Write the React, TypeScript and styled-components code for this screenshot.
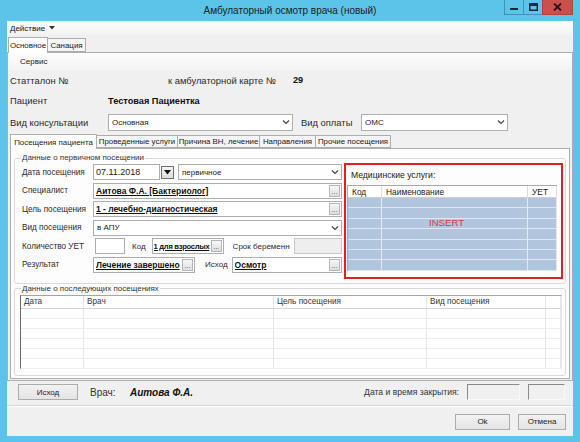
import React from "react";
import styled, { createGlobalStyle } from "styled-components";

const Global = createGlobalStyle`
  html, body { margin: 0; padding: 0; }
  body { font-family: "Liberation Sans", Arial, sans-serif; background: #5bc4e8; color: #222; }
  * { box-sizing: border-box; }
`;

const Window = styled.div`
  width: 580px;
  height: 442px;
  background: #5bc4e8;
  display: flex;
  flex-direction: column;
  overflow: hidden;
`;

const TitleBar = styled.div`
  height: 21px;
  display: grid;
  grid-template-columns: 1fr auto 1fr;
  align-items: start;
`;

const Title = styled.div`
  grid-column: 2;
  font-size: 10px;
  line-height: 21px;
  color: #1d1d1d;
`;

const Controls = styled.div`
  grid-column: 3;
  justify-self: end;
  display: flex;
  margin-right: 7px;
`;

const CtrlBtn = styled.div<{ $w: number; $close?: boolean }>`
  width: ${(p) => p.$w}px;
  height: 15px;
  display: flex;
  align-items: center;
  justify-content: center;
  background: ${(p) => (p.$close ? "#c9504b" : "#5bc4e8")};
  border: 1px solid ${(p) => (p.$close ? "#b04440" : "#3d93bd")};
  border-top: none;
  margin-left: -1px;
`;

const Client = styled.div`
  flex: 1;
  margin: 0 7px 6px 7px;
  background: #f0f0f0;
  display: flex;
  flex-direction: column;
`;

const MenuBar = styled.div`
  height: 14px;
  background: linear-gradient(#fdfdfd, #f1f2f4);
  font-size: 8px;
  display: flex;
  align-items: center;
  padding-left: 3px;
  gap: 4px;
  color: #111;
`;

const TabStrip = styled.div<{ $h: number; $pl: number }>`
  height: ${(p) => p.$h}px;
  display: flex;
  align-items: flex-end;
  padding-left: ${(p) => p.$pl}px;
  position: relative;
  z-index: 1;
`;

const Tab = styled.div<{ $active?: boolean; $w: number; $h: number }>`
  width: ${(p) => p.$w}px;
  height: ${(p) => (p.$active ? p.$h + 2 : p.$h)}px;
  margin-bottom: ${(p) => (p.$active ? -1 : 0)}px;
  border: 1px solid #adadad;
  border-bottom: ${(p) => (p.$active ? "none" : "1px solid #adadad")};
  margin-right: -1px;
  background: ${(p) => (p.$active ? "#ffffff" : "#f5f5f5")};
  font-size: 7.9px;
  white-space: nowrap;
  overflow: hidden;
  display: flex;
  align-items: center;
  justify-content: center;
  color: #1a1a1a;
`;

const OuterPanel = styled.div`
  height: 329px;
  border: 1px solid #adadad;
  background: #f0f0f0;
  display: flex;
  flex-direction: column;
  padding-bottom: 1px;
`;

const ServiceBar = styled.div`
  height: 17px;
  background: linear-gradient(#fcfcfc, #f4f4f4);
  font-size: 8px;
  display: flex;
  align-items: center;
  padding-left: 12px;
  color: #222;
`;

const InfoRow = styled.div<{ $h: number }>`
  height: ${(p) => p.$h}px;
  display: flex;
  align-items: center;
  padding-left: 2px;
  font-size: 9.4px;
  color: #2a2a2a;
`;

const InfoLabel = styled.span<{ $w: number; $ml?: number }>`
  width: ${(p) => p.$w}px;
  margin-left: ${(p) => p.$ml ?? 0}px;
  flex: none;
  white-space: nowrap;
`;

const BoldValue = styled.span`
  font-weight: bold;
  font-size: 9.2px;
  color: #111;
`;

const Combo = styled.div<{ $w?: number; $h?: number; $ml?: number }>`
  ${(p) => (p.$w ? `width: ${p.$w}px; flex: none;` : "flex: 1;")}
  margin-left: ${(p) => p.$ml ?? 0}px;
  height: ${(p) => p.$h ?? 16}px;
  border: 1px solid #abadb3;
  background: #fff;
  display: flex;
  align-items: center;
  padding-left: 3px;
  font-size: 8px;
  color: #222;
  min-width: 0;
`;

const ComboText = styled.span`
  flex: 1;
  white-space: nowrap;
  overflow: hidden;
`;

const InnerPanel = styled.div`
  flex: 1;
  margin: 0 2px;
  border: 1px solid #adadad;
  background: #fdfdfd;
  padding: 4px 3px 1px 3px;
  display: flex;
  flex-direction: column;
`;

const Group = styled.fieldset`
  margin: 0;
  padding: 0;
  border: 1px solid #d9d9d9;
  border-radius: 3px;
  min-width: 0;
`;

const Legend = styled.legend`
  font-size: 8px;
  line-height: 10px;
  padding: 0 1px;
  margin-left: 6px;
  color: #333;
`;

const GroupBody = styled.div<{ $pad: string }>`
  display: flex;
  padding: ${(p) => p.$pad};
  gap: 2px;
`;

const Form = styled.div`
  width: 320px;
  padding-top: 1px;
  display: grid;
  grid-template-columns: 71px 1fr;
  grid-auto-rows: 16px;
  row-gap: 2.6px;
  align-items: center;
`;

const FieldLabel = styled.span`
  font-size: 8.2px;
  color: #2a2a2a;
  white-space: nowrap;
`;

const Fields = styled.div`
  display: flex;
  align-items: center;
  height: 16px;
  min-width: 0;
`;

const TextBox = styled.div<{ $w?: number; $disabled?: boolean; $ml?: number }>`
  ${(p) => (p.$w ? `width: ${p.$w}px; flex: none;` : "flex: 1;")}
  margin-left: ${(p) => p.$ml ?? 0}px;
  height: 16px;
  border: 1px solid ${(p) => (p.$disabled ? "#c8c8c8" : "#abadb3")};
  background: ${(p) => (p.$disabled ? "#eeeeee" : "#fff")};
  font-size: 9px;
  display: flex;
  align-items: center;
  padding-left: 2px;
`;

const DateBtn = styled.div`
  width: 13px;
  height: 13px;
  flex: none;
  border: 1px solid #707070;
  background: linear-gradient(#f4f4f4, #dcdcdc);
  display: flex;
  align-items: center;
  justify-content: center;
  margin-left: 1px;
`;

const Lookup = styled.div<{ $w?: number; $ml?: number; $tight?: boolean }>`
  ${(p) => (p.$w ? `width: ${p.$w}px; flex: none;` : "flex: 1;")}
  margin-left: ${(p) => p.$ml ?? 0}px;
  height: 16px;
  border: 1px solid #abadb3;
  background: #fff;
  display: flex;
  align-items: center;
  padding-left: ${(p) => (p.$tight ? 1 : 2)}px;
  min-width: 0;
`;

const LookupText = styled.span<{ $tight?: boolean }>`
  flex: 1;
  min-width: 0;
  font-size: ${(p) => (p.$tight ? 7.6 : 8.5)}px;
  letter-spacing: ${(p) => (p.$tight ? -0.3 : 0)}px;
  font-weight: bold;
  text-decoration: underline;
  white-space: nowrap;
  overflow: hidden;
  color: #111;
`;

const Ellipsis = styled.div`
  width: 11px;
  height: 12px;
  flex: none;
  margin: 0 1px;
  border: 1px solid #b5b5b5;
  background: linear-gradient(#f7f7f7, #dedede);
  font-size: 7px;
  line-height: 8px;
  display: flex;
  align-items: flex-end;
  justify-content: center;
  color: #555;
`;

const InlineLabel = styled.span<{ $ml: number; $w?: number }>`
  margin-left: ${(p) => p.$ml}px;
  ${(p) => (p.$w ? `width: ${p.$w}px; overflow: hidden;` : "")}
  flex: none;
  font-size: 8px;
  color: #2a2a2a;
  white-space: nowrap;
  margin-right: 3px;
`;

const RedBox = styled.div`
  width: 219px;
  flex: none;
  border: 2px solid #e11f1f;
  padding: 0 4px 6px 1px;
  display: flex;
  flex-direction: column;
`;

const RedTitle = styled.div`
  height: 20px;
  font-size: 8.6px;
  display: flex;
  align-items: center;
  padding-left: 4px;
  color: #222;
`;

const MedTable = styled.div`
  border-top: 1px solid #a8a8a8;
  border-left: 1px solid #a8a8a8;
  display: flex;
  flex-direction: column;
`;

const MedRow = styled.div<{ $header?: boolean }>`
  display: grid;
  grid-template-columns: 34px 146px 1fr;
  height: ${(p) => (p.$header ? 12 : 10.4)}px;
  background: ${(p) => (p.$header ? "#ffffff" : "#b1c5de")};
  border-bottom: 1px solid ${(p) => (p.$header ? "#cfcfcf" : "#dde6f1")};
`;

const MedCell = styled.div<{ $header?: boolean }>`
  border-right: 1px solid ${(p) => (p.$header ? "#dcdcdc" : "#e3eaf3")};
  font-size: 8.4px;
  padding-left: 4px;
  line-height: 12px;
  color: #222;
  white-space: nowrap;
`;

const MedBody = styled.div`
  position: relative;
`;

const InsertLabel = styled.span`
  position: absolute;
  left: 81px;
  top: 19px;
  font-size: 9.6px;
  color: #d8334f;
`;

const VisitTable = styled.div`
  flex: 1;
  height: 74px;
  border-top: 1px solid #a5a5a5;
  border-left: 1px solid #6a6a6a;
  border-right: 1px solid #e5e5e5;
  border-bottom: 1px solid #e5e5e5;
  background: #fff;
  display: flex;
  flex-direction: column;
`;

const VisitRow = styled.div<{ $header?: boolean }>`
  display: grid;
  grid-template-columns: 63px 190px 153px 119px 1fr;
  height: ${(p) => (p.$header ? 13 : 10)}px;
  border-bottom: 1px solid ${(p) => (p.$header ? "#d4d4d4" : "#eeeeee")};
  flex: none;
`;

const VisitCell = styled.div`
  border-right: 1px solid #e6e6e6;
  font-size: 8.2px;
  line-height: 12px;
  padding-left: 3px;
  color: #333;
  white-space: nowrap;
`;

const BottomRow = styled.div`
  height: 22px;
  display: flex;
  align-items: center;
  padding: 0 8px 0 11px;
  font-size: 10px;
  color: #333;
`;

const Button = styled.div<{ $w: number }>`
  width: ${(p) => p.$w}px;
  height: 16px;
  flex: none;
  border: 1px solid #acacac;
  background: linear-gradient(#f2f2f2, #e4e4e4);
  font-size: 8px;
  display: flex;
  align-items: center;
  justify-content: center;
  color: #1a1a1a;
`;

const DoctorLabel = styled.span`
  margin-left: 12px;
  width: 40px;
`;

const DoctorName = styled.span`
  font-weight: bold;
  font-style: italic;
  color: #111;
`;

const Spacer = styled.div`
  flex: 1;
`;

const CloseLabel = styled.span`
  font-size: 8.6px;
`;

const SunkenBox = styled.div<{ $w: number }>`
  width: ${(p) => p.$w}px;
  height: 16px;
  margin-left: 8px;
  border-top: 1px solid #8a8a8a;
  border-left: 1px solid #8a8a8a;
  border-right: 1px solid #f8f8f8;
  border-bottom: 1px solid #f8f8f8;
  background: #f0f0f0;
`;

const Separator = styled.div`
  margin-top: 2px;
  height: 2px;
  border-top: 1px solid #d6d6d6;
  border-bottom: 1px solid #ffffff;
`;

const ButtonRow = styled.div`
  flex: 1;
  display: flex;
  align-items: center;
  justify-content: flex-end;
  gap: 8px;
  padding-right: 7px;
`;

const Chevron = () => (
  <svg width="12" height="8" viewBox="0 0 12 8">
    <path d="M3 2.5 L6 5.5 L9 2.5" fill="none" stroke="#444" strokeWidth="1.2" />
  </svg>
);

const medRows = Array.from({ length: 7 });
const visitRows = Array.from({ length: 6 });

export default function App() {
  return (
    <>
      <Global />
      <Window>
        <TitleBar>
          <Title>Амбулаторный осмотр врача (новый)</Title>
          <Controls>
            <CtrlBtn $w={20}>
              <svg width="8" height="8" viewBox="0 0 8 8">
                <rect x="0" y="5" width="8" height="2" fill="#1b2a33" />
              </svg>
            </CtrlBtn>
            <CtrlBtn $w={20}>
              <svg width="9" height="8" viewBox="0 0 9 8">
                <rect x="0.75" y="0.75" width="7.5" height="6.5" fill="none" stroke="#1b2a33" strokeWidth="1.5" />
                <rect x="0" y="0" width="9" height="3" fill="#1b2a33" />
              </svg>
            </CtrlBtn>
            <CtrlBtn $w={31} $close>
              <svg width="9" height="8" viewBox="0 0 9 8">
                <path d="M1 0.5 L8 7.5 M8 0.5 L1 7.5" stroke="#2a1414" strokeWidth="1.8" />
              </svg>
            </CtrlBtn>
          </Controls>
        </TitleBar>
        <Client>
          <MenuBar>
            <span>Действие</span>
            <svg width="6" height="4" viewBox="0 0 6 4">
              <path d="M0 0 L6 0 L3 3.5 Z" fill="#333" />
            </svg>
          </MenuBar>
          <TabStrip $h={17} $pl={1}>
            <Tab $active $w={40} $h={14}>Основное</Tab>
            <Tab $w={39} $h={14}>Санация</Tab>
          </TabStrip>
          <OuterPanel>
            <ServiceBar>Сервис</ServiceBar>
            <InfoRow $h={20}>
              <InfoLabel $w={158}>Статталон №</InfoLabel>
              <InfoLabel $w={125}>к амбулаторной карте №</InfoLabel>
              <BoldValue>29</BoldValue>
            </InfoRow>
            <InfoRow $h={21}>
              <InfoLabel $w={98}>Пациент</InfoLabel>
              <BoldValue>Тестовая Пациентка</BoldValue>
            </InfoRow>
            <InfoRow $h={22}>
              <InfoLabel $w={98}>Вид консультации</InfoLabel>
              <Combo $w={185} $h={17}>
                <ComboText>Основная</ComboText>
                <Chevron />
              </Combo>
              <InfoLabel $w={60} $ml={8}>Вид оплаты</InfoLabel>
              <Combo $w={147} $h={17}>
                <ComboText>ОМС</ComboText>
                <Chevron />
              </Combo>
            </InfoRow>
            <TabStrip $h={15} $pl={2}>
              <Tab $active $w={87} $h={13}>Посещения пациента</Tab>
              <Tab $w={82} $h={13}>Проведенные услуги</Tab>
              <Tab $w={83} $h={13}>Причина ВН, лечение</Tab>
              <Tab $w={57} $h={13}>Направления</Tab>
              <Tab $w={76} $h={13}>Прочие посещения</Tab>
            </TabStrip>
            <InnerPanel>
              <Group>
                <Legend>Данные о первичном посещении</Legend>
                <GroupBody $pad="0 2px 4px 7px">
                  <Form>
                    <FieldLabel>Дата посещения</FieldLabel>
                    <Fields>
                      <TextBox $w={67}>07.11.2018</TextBox>
                      <DateBtn>
                        <svg width="7" height="5" viewBox="0 0 7 5">
                          <path d="M0 0 L7 0 L3.5 4.5 Z" fill="#111" />
                        </svg>
                      </DateBtn>
                      <Combo $ml={4}>
                        <ComboText>первичное</ComboText>
                        <Chevron />
                      </Combo>
                    </Fields>

                    <FieldLabel>Специалист</FieldLabel>
                    <Fields>
                      <Lookup>
                        <LookupText>Аитова Ф.А. [Бактериолог]</LookupText>
                        <Ellipsis>...</Ellipsis>
                      </Lookup>
                    </Fields>

                    <FieldLabel>Цель посещения</FieldLabel>
                    <Fields>
                      <Lookup>
                        <LookupText>1 - лечебно-диагностическая</LookupText>
                        <Ellipsis>...</Ellipsis>
                      </Lookup>
                    </Fields>

                    <FieldLabel>Вид посещения</FieldLabel>
                    <Fields>
                      <Combo>
                        <ComboText>в АПУ</ComboText>
                        <Chevron />
                      </Combo>
                    </Fields>

                    <FieldLabel>Количество УЕТ</FieldLabel>
                    <Fields>
                      <TextBox $w={30} $ml={2} />
                      <InlineLabel $ml={7}>Код</InlineLabel>
                      <Lookup $w={72} $ml={3} $tight>
                        <LookupText $tight>1 для взрослых</LookupText>
                        <Ellipsis>...</Ellipsis>
                      </Lookup>
                      <InlineLabel $ml={9} $w={57}>Срок беременности</InlineLabel>
                      <TextBox $disabled $ml={1} />
                    </Fields>

                    <FieldLabel>Результат</FieldLabel>
                    <Fields>
                      <Lookup $w={102}>
                        <LookupText>Лечение завершено</LookupText>
                        <Ellipsis>...</Ellipsis>
                      </Lookup>
                      <InlineLabel $ml={10}>Исход</InlineLabel>
                      <Lookup $ml={1}>
                        <LookupText>Осмотр</LookupText>
                        <Ellipsis>...</Ellipsis>
                      </Lookup>
                    </Fields>
                  </Form>
                  <RedBox>
                    <RedTitle>Медицинские услуги:</RedTitle>
                    <MedTable>
                      <MedRow $header>
                        <MedCell $header>Код</MedCell>
                        <MedCell $header>Наименование</MedCell>
                        <MedCell $header>УЕТ</MedCell>
                      </MedRow>
                      <MedBody>
                        {medRows.map((_, i) => (
                          <MedRow key={i}>
                            <MedCell />
                            <MedCell />
                            <MedCell />
                          </MedRow>
                        ))}
                        <InsertLabel>INSERT</InsertLabel>
                      </MedBody>
                    </MedTable>
                  </RedBox>
                </GroupBody>
              </Group>
              <Group>
                <Legend>Данные о последующих посещениях</Legend>
                <GroupBody $pad="1px 3px 6px 5px">
                  <VisitTable>
                    <VisitRow $header>
                      <VisitCell>Дата</VisitCell>
                      <VisitCell>Врач</VisitCell>
                      <VisitCell>Цель посещения</VisitCell>
                      <VisitCell>Вид посещения</VisitCell>
                      <VisitCell />
                    </VisitRow>
                    {visitRows.map((_, i) => (
                      <VisitRow key={i}>
                        <VisitCell />
                        <VisitCell />
                        <VisitCell />
                        <VisitCell />
                        <VisitCell />
                      </VisitRow>
                    ))}
                  </VisitTable>
                </GroupBody>
              </Group>
            </InnerPanel>
          </OuterPanel>
          <BottomRow>
            <Button $w={60}>Исход</Button>
            <DoctorLabel>Врач:</DoctorLabel>
            <DoctorName>Аитова Ф.А.</DoctorName>
            <Spacer />
            <CloseLabel>Дата и время закрытия:</CloseLabel>
            <SunkenBox $w={53} />
            <SunkenBox $w={37} />
          </BottomRow>
          <Separator />
          <ButtonRow>
            <Button $w={55}>Ok</Button>
            <Button $w={48}>Отмена</Button>
          </ButtonRow>
        </Client>
      </Window>
    </>
  );
}
